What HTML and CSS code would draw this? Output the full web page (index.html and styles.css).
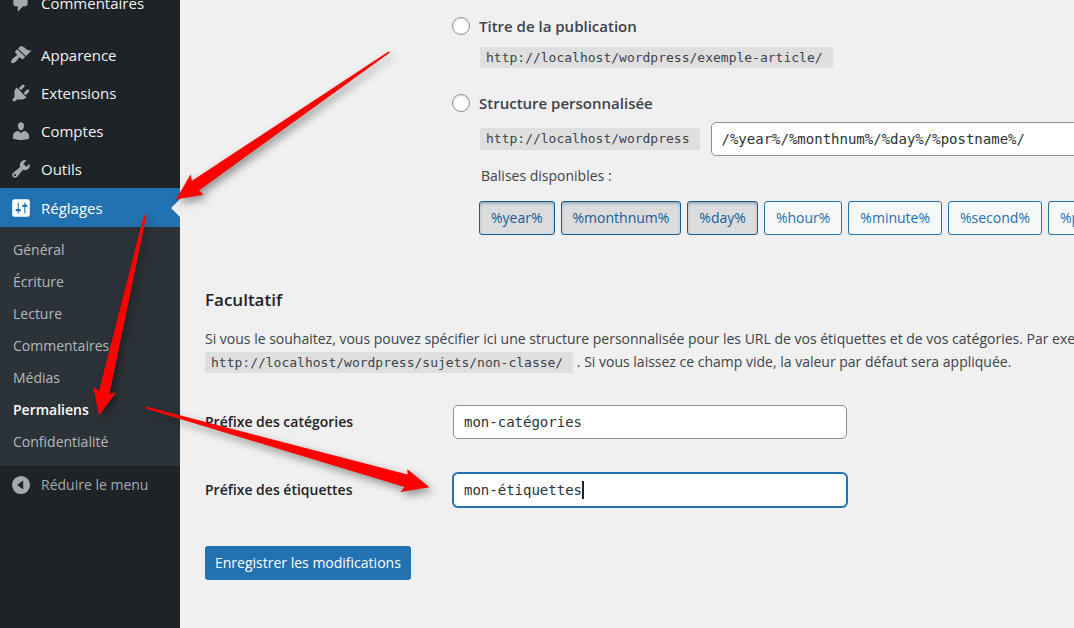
FILE: index.html
```html
<!DOCTYPE html>
<html lang="fr">
<head>
<meta charset="utf-8">
<title>Réglages des permaliens</title>
<link rel="stylesheet" href="styles.css">
</head>
<body>
<div class="layout">
  <nav class="sidebar">
    <ul class="menu">
      <li class="menu-group-end"><a class="menu-link" href="#"><svg class="icon" viewBox="0 0 20 20"><path d="M5 2h9c1.100 0 2 .9 2 2v7c0 1.100-.9 2-2 2h-2l-5 5v-5H5c-1.100 0-2-.9-2-2V4c0-1.100.9-2 2-2z"/></svg>Commentaires</a></li>
      <li><a class="menu-link" href="#"><svg class="icon" viewBox="0 0 20 20"><path d="M14.480 11.060L7.410 3.990l1.500-1.500c.5-.56 2.300-.47 3.510.32 1.210.8 1.430 1.280 2.910 2.100 1.180.64 2.450 1.260 4.450.85zm-.71.71L6.700 4.700 4.930 6.470c-.39.39-.39 1.020 0 1.410l1.060 1.060c.39.39.39 1.030 0 1.420-.6.6-1.430 1.110-2.210 1.690-.35.26-.7.53-1.010.84C1.430 14.230.4 16.080 1.400 17.070c.99 1 2.840-.03 4.180-1.360.31-.31.58-.66.85-1.020.57-.78 1.080-1.610 1.690-2.210.39-.39 1.020-.39 1.410 0l1.060 1.060c.39.39 1.020.39 1.410 0z"/></svg>Apparence</a></li>
      <li><a class="menu-link" href="#"><svg class="icon" viewBox="0 0 20 20"><path d="M13.110 4.360L9.870 7.600 8 5.730l3.240-3.240c.35-.34 1.050-.2 1.560.32.52.51.66 1.210.31 1.550zm-8 1.770l.91-1.120 9.010 9.010-1.190.84c-.71.71-2.630 1.160-3.820 1.160H6.140L4.900 17.260c-.59.59-1.540.59-2.120 0-.59-.58-.59-1.530 0-2.120l1.240-1.240v-3.880c0-1.130.4-3.190 1.090-3.890zm7.260 3.970l3.240-3.240c.34-.35 1.040-.21 1.550.31.52.51.66 1.210.31 1.550l-3.240 3.250z"/></svg>Extensions</a></li>
      <li><a class="menu-link" href="#"><svg class="icon" viewBox="0 0 20 20"><path d="M10 9.250c-2.270 0-2.730-3.440-2.730-3.440C7 4.020 7.820 2 9.970 2c2.160 0 2.980 2.020 2.710 3.810 0 0-.41 3.440-2.680 3.440zm0 2.570L12.720 10c2.390 0 4.520 2.330 4.520 4.530v2.490s-3.650 1.130-7.240 1.130c-3.650 0-7.240-1.130-7.240-1.130v-2.490c0-2.250 1.940-4.480 4.470-4.480z"/></svg>Comptes</a></li>
      <li><a class="menu-link" href="#"><svg class="icon" viewBox="0 0 20 20"><path d="M16.680 9.770c-1.340 1.340-3.300 1.670-4.950.99l-5.410 6.520c-.99.99-2.590.99-3.580 0s-.99-2.590 0-3.570l6.520-5.420c-.68-1.650-.35-3.610.99-4.950 1.280-1.280 3.120-1.620 4.720-1.060l-2.890 2.890 2.820 2.820 2.860-2.870c.53 1.580.18 3.390-1.080 4.650zM3.810 16.210c.4.39 1.040.39 1.430 0 .4-.4.4-1.040 0-1.430-.39-.4-1.030-.4-1.430 0-.39.39-.39 1.030 0 1.430z"/></svg>Outils</a></li>
      <li>
        <a class="menu-link menu-link-current" href="#"><svg class="icon" viewBox="0 0 20 20"><path d="M18 16V4c0-1-.5-2-2-2H4C3 2 2 3 2 4v12c0 1 .5 2 2 2h12c1 0 2-.5 2-2zM8 11h1c.55 0 1 .45 1 1s-.45 1-1 1H8v1.500c0 .28-.22.5-.5.5s-.5-.22-.5-.5V13H6c-.55 0-1-.45-1-1s.45-1 1-1h1V5.500c0-.28.22-.5.5-.5s.5.22.5.5V11zm5-2h-1c-.55 0-1-.45-1-1s.45-1 1-1h1V5.500c0-.28.22-.5.5-.5s.5.22.5.5V7h1c.55 0 1 .45 1 1s-.45 1-1 1h-1v5.500c0 .28-.22.5-.5.5s-.5-.22-.5-.5V9z"/></svg>Réglages</a>
        <ul class="submenu">
          <li><a class="submenu-link" href="#">Général</a></li>
          <li><a class="submenu-link" href="#">Écriture</a></li>
          <li><a class="submenu-link" href="#">Lecture</a></li>
          <li><a class="submenu-link" href="#">Commentaires</a></li>
          <li><a class="submenu-link" href="#">Médias</a></li>
          <li><a class="submenu-link submenu-link-current" href="#">Permaliens</a></li>
          <li><a class="submenu-link" href="#">Confidentialité</a></li>
        </ul>
      </li>
      <li><button class="menu-link collapse" type="button"><svg class="icon" viewBox="0 0 20 20"><path fill-rule="evenodd" d="M10 1.800a8.200 8.200 0 1 0 0 16.400a8.200 8.200 0 0 0 0-16.400zM12 6v8L6.500 10z"/></svg>Réduire le menu</button></li>
    </ul>
  </nav>

  <main class="content">
    <form>
      <div class="structure">
        <label class="choice"><input class="radio" type="radio" name="structure">Titre de la publication</label>
        <div class="example"><code class="code">http://localhost/wordpress/exemple-article/</code></div>
        <label class="choice"><input class="radio" type="radio" name="structure">Structure personnalisée</label>
        <div class="custom">
          <code class="code">http://localhost/wordpress</code>
          <input class="field field-custom" type="text" aria-label="Structure personnalisée" value="/%year%/%monthnum%/%day%/%postname%/">
        </div>
        <p class="tags-title">Balises disponibles :</p>
        <div class="tags">
          <button class="tag tag-active" type="button">%year%</button>
          <button class="tag tag-active" type="button">%monthnum%</button>
          <button class="tag tag-active" type="button">%day%</button>
          <button class="tag" type="button">%hour%</button>
          <button class="tag" type="button">%minute%</button>
          <button class="tag" type="button">%second%</button>
          <button class="tag" type="button">%post_id%</button>
        </div>
      </div>

      <h2 class="heading">Facultatif</h2>
      <p class="intro">Si vous le souhaitez, vous pouvez spécifier ici une structure personnalisée pour les URL de vos étiquettes et de vos catégories. Par exemple,<br><code class="code">http://localhost/wordpress/sujets/non-classe/</code> . Si vous laissez ce champ vide, la valeur par défaut sera appliquée.</p>

      <div class="row">
        <label class="row-label" for="categories">Préfixe des catégories</label>
        <input class="field" id="categories" type="text" value="mon-catégories">
      </div>
      <div class="row">
        <label class="row-label" for="etiquettes">Préfixe des étiquettes</label>
        <div class="field-wrap">
          <input class="field field-focus" id="etiquettes" type="text" value="mon-étiquettes">
          <span class="caret"></span>
        </div>
      </div>
      <button class="submit" type="submit">Enregistrer les modifications</button>
    </form>
  </main>
</div>

<svg class="arrows" width="1074" height="628" viewBox="0 0 1074 628" aria-hidden="true">
  <path d="M388.500 51.500L390 52.500L199 190.500L203.500 194.700L176 199.500L190.500 174.500L192 180.700Z"/>
  <path d="M144 215L146.500 215.500L109.500 393.500L116 392.500L99 415.500L93.300 387L99 391Z"/>
  <path d="M146 406.500L407.700 474.500L407.300 469L429.500 487.300L400.300 492L404.500 487L145.500 408.500Z"/>
</svg>
</body>
</html>
```
FILE: styles.css
```css
* { box-sizing: border-box; }

body {
  margin: 0;
  background: #f0f0f0;
  color: #3c434a;
  font: 14px/24px "Open Sans", "Noto Sans", sans-serif;
  overflow: hidden;
}

ul { list-style: none; margin: 0; padding: 0; }
p { margin: 0; }
button, input { font: inherit; }

.layout { display: flex; min-height: 100vh; }

.sidebar { flex: 0 0 180px; background: #1d2327; }
.menu { margin-top: -16px; }
.menu-group-end { margin-bottom: 14px; }

.menu-link {
  display: flex;
  align-items: center;
  gap: 9px;
  width: 100%;
  height: 38px;
  padding: 0 10px;
  color: #f0f0f1;
  font-size: 15px;
  text-decoration: none;
}
.icon { flex: none; width: 22px; height: 22px; fill: #a7aaad; }

.menu-link-current {
  position: relative;
  height: 39px;
  background: #2271b1;
  color: #fff;
}
.menu-link-current .icon { fill: #fff; }
.menu-link-current::after {
  content: "";
  position: absolute;
  top: 11px;
  right: 0;
  border: 9px solid transparent;
  border-left-width: 0;
  border-right-color: #f0f0f0;
}

.submenu { padding: 7px 0 8px; background: #2c3338; }
.submenu-link {
  display: block;
  padding: 0 13px;
  color: #b5b8bb;
  line-height: 32px;
  text-decoration: none;
}
.submenu-link-current { color: #fff; font-weight: 600; }

.collapse { border: 0; background: none; color: #a7aaad; font-size: 14px; }

.content { flex: 1; min-width: 0; padding: 14px 0 48px 25px; white-space: nowrap; overflow: hidden; }

.structure { margin-left: 247px; }
.choice {
  display: flex;
  align-items: center;
  gap: 9px;
  font-size: 15px;
  font-weight: 600;
}
.radio {
  appearance: none;
  width: 18px;
  height: 18px;
  margin: 0;
  border: 1px solid #8c8f94;
  border-radius: 50%;
  background: #fff;
  box-shadow: inset 0 1px 2px rgba(0, 0, 0, .1);
}
.code {
  padding: 3px 10px 3px 6px;
  background: #dfdfe0;
  font: 13px/16px "DejaVu Sans Mono", "Liberation Mono", monospace;
}
.example { margin: 7px 0 22px 28px; }
.custom { display: flex; align-items: center; gap: 11px; margin: 7px 0 8px 28px; }

.field {
  width: 394px;
  height: 34px;
  padding: 0 10px;
  border: 1px solid #8c8f94;
  border-radius: 5px;
  background: #fff;
  color: #2c3338;
  font: 14px "DejaVu Sans Mono", "Liberation Mono", monospace;
  outline: none;
}
.field-custom { flex: none; }
.field-focus { border-color: #2271b1; box-shadow: 0 0 0 1px #2271b1; }

.tags-title { margin-left: 29px; }
.tags { display: flex; gap: 6px; margin: 13px 0 0 27px; }
.tag {
  flex: none;
  height: 34px;
  padding: 0 11px;
  border: 1px solid #2271b1;
  border-radius: 3px;
  background: #f6f7f7;
  color: #2271b1;
}
.tag-active {
  border-color: #135e96;
  background: #dcdcde;
  color: #135e96;
  box-shadow: inset 0 2px 5px -3px #0a4b78;
}

.heading { margin: 53px 0 15px; color: #1d2327; font-size: 17px; line-height: 24px; font-weight: 600; }
.intro { margin-bottom: 32px; line-height: 23px; }

.row { display: flex; align-items: center; margin-bottom: 34px; }
.row-label { flex: 0 0 248px; color: #1d2327; font-size: 14px; font-weight: 600; }
.field-wrap { position: relative; font: 14px "DejaVu Sans Mono", "Liberation Mono", monospace; }
.caret {
  position: absolute;
  top: 8px;
  left: calc(11px + 14ch);
  width: 2px;
  height: 18px;
  background: #1d2327;
}

.submit {
  height: 34px;
  padding: 0 10px;
  margin-top: 5px;
  border: 0;
  border-radius: 3px;
  background: #2271b1;
  color: #fff;
}

.arrows {
  position: absolute;
  top: 0;
  left: 0;
  fill: #f00;
  filter: drop-shadow(3px 4px 4px rgba(0, 0, 0, .4));
  pointer-events: none;
}
```
